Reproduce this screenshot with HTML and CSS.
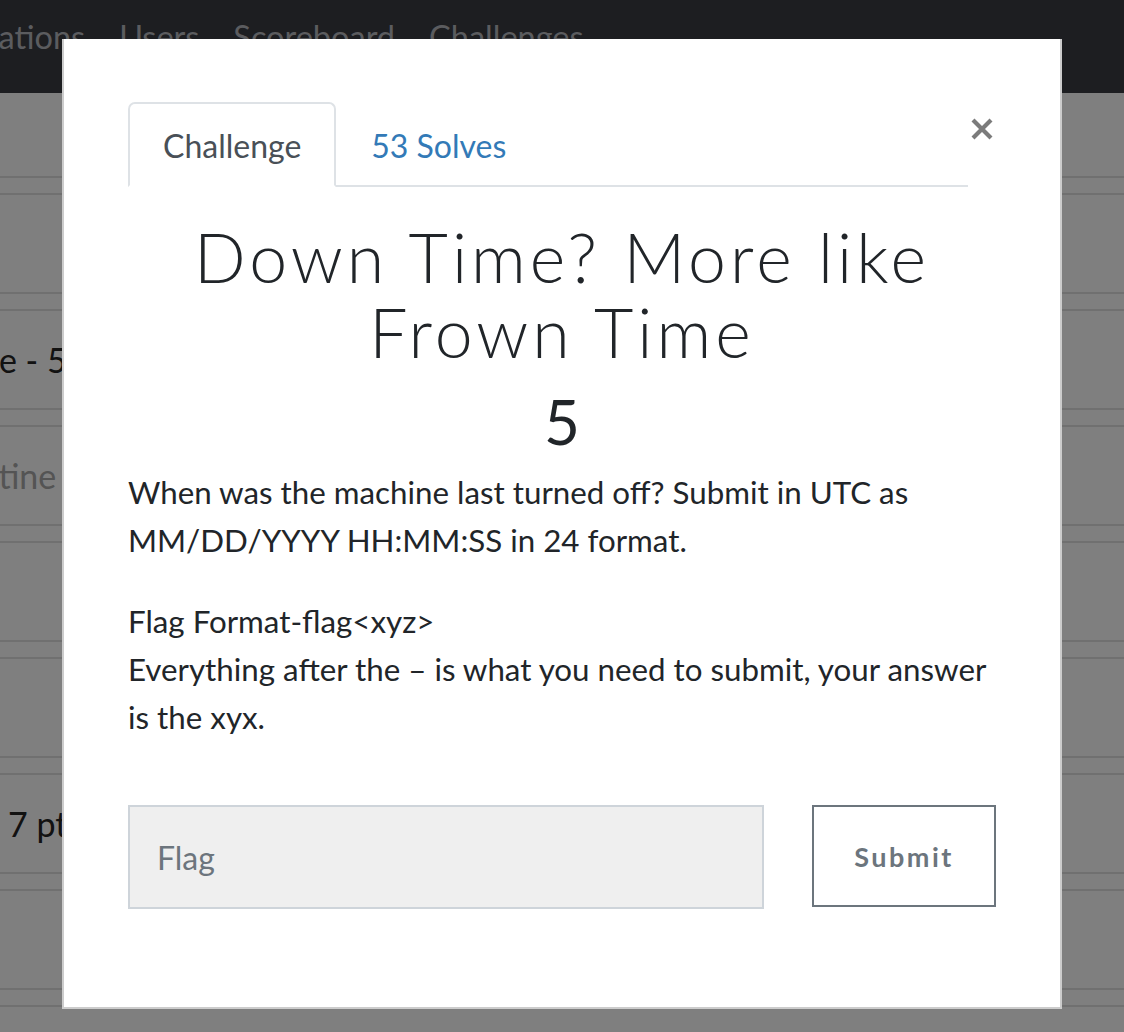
FILE: index.html
```html
<!DOCTYPE html>
<html lang="en">
<head>
  <meta charset="UTF-8" />
  <title>Challenges</title>
  <link rel="stylesheet" href="styles.css">
</head>
<body>
  <nav class="topnav">
    <a href="#" class="cut-link">Notifications</a>
    <a href="#">Users</a>
    <a href="#">Scoreboard</a>
    <a href="#">Challenges</a>
  </nav>

  <div class="board">
    <div class="row row-cut"></div>
    <div class="row"></div>
    <div class="row"><span class="chal">me - 5 pts</span></div>
    <div class="row"><span class="chal solved">Routine</span></div>
    <div class="row"></div>
    <div class="row"></div>
    <div class="row"><span class="chal low">e - 7 pts</span></div>
    <div class="row"></div>
    <div class="row"></div>
  </div>

  <div class="backdrop"></div>

  <div class="modal">
    <div class="modal-head">
      <ul class="tabs">
        <li class="tab active">Challenge</li>
        <li class="tab"><a href="#">53 Solves</a></li>
      </ul>
      <button class="close" aria-label="Close">
        <svg width="24" height="24" viewBox="0 0 24 24">
          <path d="M3 3 L21 21 M21 3 L3 21" stroke="#7b7b7b" stroke-width="4.2" fill="none"/>
        </svg>
      </button>
    </div>

    <h2 class="chal-name">Down Time? More like Frown Time</h2>
    <h3 class="chal-value">5</h3>

    <div class="chal-desc">
      <p>When was the machine last turned off? Submit in UTC as MM/DD/YYYY HH:MM:SS in 24 format.</p>
      <p>Flag Format-flag&lt;xyz&gt;<br>Everything after the – is what you need to submit, your answer is the xyx.</p>
    </div>

    <form class="answer">
      <input class="flag-input" type="text" placeholder="Flag">
      <button class="submit-btn" type="button">Submit</button>
    </form>
  </div>
</body>
</html>
```

FILE: styles.css
```css
body {
  margin: 0;
  font-family: "Lato", "Liberation Sans", sans-serif;
  background: #ffffff;
  color: #212529;
  overflow: hidden;
}

.topnav {
  height: 93px;
  background-color: #3a3c43;
  display: flex;
  align-items: center;
  gap: 34px;
  margin-left: -98px;
  overflow: hidden;
}

.topnav a {
  color: #b7b9be;
  text-decoration: none;
  font-size: 32.5px;
  line-height: 1;
  margin-top: -18px;
  white-space: nowrap;
}

.board {
  display: flex;
  flex-direction: column;
  height: 939px;
  overflow: hidden;
}

.row {
  flex-shrink: 0;
  height: 97px;
  border-top: 2px solid #e0e0e0;
  border-bottom: 2px solid #e0e0e0;
  margin-bottom: 15px;
  display: flex;
  align-items: center;
}

.row-cut {
  height: 83px;
  border-top: none;
}

.chal {
  font-size: 34px;
  margin-left: -29px;
  color: #242424;
  white-space: nowrap;
}

.chal.solved {
  color: #a8a8a8;
  margin-left: -60px;
}

.chal.low {
  margin-left: -40px;
}

.backdrop {
  position: fixed;
  inset: 0;
  background: rgba(0, 0, 0, 0.5);
}

.modal {
  position: absolute;
  left: 62px;
  top: 39px;
  width: 868px;
  height: 905px;
  padding: 63px 64px 0 64px;
  background: #ffffff;
  border: 2px solid rgba(0, 0, 0, 0.2);
  border-top: none;
}

.modal-head {
  display: flex;
  align-items: flex-start;
}

.tabs {
  flex: 1;
  display: flex;
  list-style: none;
  margin: 0;
  padding: 0;
  border-bottom: 2px solid #dee2e6;
}

.tab {
  font-size: 32px;
  line-height: 36px;
  padding: 24px 33px 21px;
  margin-bottom: -2px;
  border: 2px solid transparent;
  border-radius: 7px 7px 0 0;
}

.tab a {
  color: #337ab7;
  text-decoration: none;
}

.tab.active {
  color: #495057;
  border-color: #dee2e6 #dee2e6 #ffffff;
  background: #ffffff;
}

.close {
  width: 28px;
  height: 28px;
  margin-top: 13px;
  padding: 0;
  border: none;
  background: none;
  display: flex;
  align-items: center;
  justify-content: center;
}

.chal-name {
  font-family: "Lato", sans-serif;
  font-weight: 300;
  font-size: 68px;
  line-height: 75px;
  letter-spacing: 4px;
  text-align: center;
  margin: 32px 0 0;
  color: #212529;
}

.chal-value {
  font-weight: 400;
  font-size: 62px;
  line-height: 70px;
  text-align: center;
  margin: 17px 0 0;
  color: #212529;
}

.chal-desc {
  margin-top: 12px;
}

.chal-desc p {
  font-size: 31.3px;
  line-height: 48px;
  margin: 0 0 33px;
}

.answer {
  display: flex;
  gap: 48px;
  margin-top: 64px;
}

.flag-input {
  flex: 1;
  box-sizing: border-box;
  height: 104px;
  padding: 0 27px;
  font-family: "Lato", sans-serif;
  font-size: 32px;
  background: #efefef;
  border: 2px solid #ced4da;
  color: #495057;
}

.flag-input::placeholder {
  color: #6c757d;
}

.submit-btn {
  width: 184px;
  height: 102px;
  background: #ffffff;
  border: 2px solid #6c757d;
  color: #6c757d;
  font-family: "Lato", sans-serif;
  font-weight: 700;
  font-size: 27px;
  letter-spacing: 2.5px;
}
```
